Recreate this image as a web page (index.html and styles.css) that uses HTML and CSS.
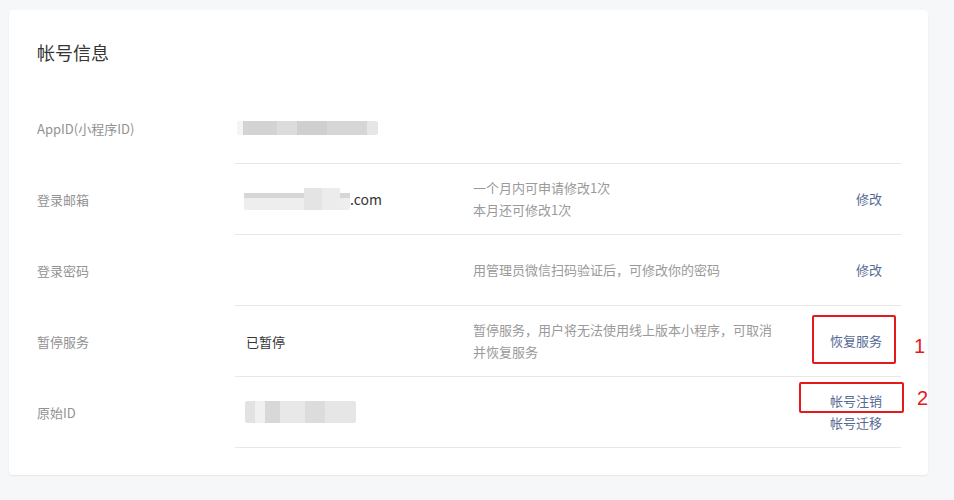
FILE: index.html
```html
<!DOCTYPE html>
<html lang="zh-CN">
<head>
<meta charset="utf-8">
<title>帐号信息</title>
<link rel="stylesheet" href="styles.css">
</head>
<body>
<div class="page">
  <div class="card">
    <h2 class="title">帐号信息</h2>
    <div class="rows">
      <div class="row">
        <div class="label">AppID(小程序ID)</div>
        <div class="main">
          <div class="value"><span class="blur blur-appid"></span></div>
          <div class="desc"></div>
          <div class="action"></div>
        </div>
      </div>
      <div class="row">
        <div class="label">登录邮箱</div>
        <div class="main">
          <div class="value"><span class="blur blur-mail"></span><span class="mail-tail">.com</span></div>
          <div class="desc">一个月内可申请修改1次<br>本月还可修改1次</div>
          <div class="action"><a class="link">修改</a></div>
        </div>
      </div>
      <div class="row">
        <div class="label">登录密码</div>
        <div class="main">
          <div class="value"></div>
          <div class="desc">用管理员微信扫码验证后，可修改你的密码</div>
          <div class="action"><a class="link">修改</a></div>
        </div>
      </div>
      <div class="row">
        <div class="label">暂停服务</div>
        <div class="main">
          <div class="value strong">已暂停</div>
          <div class="desc">暂停服务，用户将无法使用线上版本小程序，可取消并恢复服务</div>
          <div class="action"><a class="link">恢复服务</a></div>
        </div>
      </div>
      <div class="row">
        <div class="label">原始ID</div>
        <div class="main">
          <div class="value"><span class="blur blur-id"></span></div>
          <div class="desc"></div>
          <div class="action"><a class="link">帐号注销</a><br><a class="link">帐号迁移</a></div>
        </div>
      </div>
    </div>
    <div class="mark mark-1"></div>
    <div class="mark mark-2"></div>
    <div class="mark-num num-1">1</div>
    <div class="mark-num num-2">2</div>
  </div>
</div>
</body>
</html>
```
FILE: styles.css
```css
html, body {
  margin: 0;
  padding: 0;
  background: #f6f7f9;
  font-family: "Noto Sans CJK SC", "Noto Sans", "Liberation Sans", sans-serif;
}
.page {
  padding: 10px 0 0 9px;
  height: 490px;
}
.card {
  position: relative;
  width: 919px;
  box-sizing: border-box;
  padding: 30px 27px 27px 28px;
  background: #fff;
  border-radius: 4px;
  box-shadow: 0 1px 2px rgba(0, 0, 0, 0.07);
}
.title {
  margin: 0 0 29px 0;
  font-size: 18px;
  line-height: 24px;
  font-weight: normal;
  color: #353535;
}
.row {
  display: flex;
  font-size: 13px;
}
.label {
  width: 198px;
  flex: none;
  display: flex;
  align-items: center;
  color: #929292;
}
.main {
  flex: 1;
  display: flex;
  align-items: center;
  height: 70px;
  border-bottom: 1px solid #e7e7eb;
  padding: 0 19px 0 11px;
}
.value {
  width: 227px;
  flex: none;
  display: flex;
  align-items: center;
  color: #353535;
}
.desc {
  width: 305px;
  flex: none;
  color: #9a9a9a;
  line-height: 22px;
}
.action {
  flex: 1;
  text-align: right;
  line-height: 22px;
}
.link {
  color: #576b95;
  text-decoration: none;
}
.blur {
  display: inline-block;
  border-radius: 2px;
}
.blur-appid {
  width: 141px;
  height: 14px;
  margin-left: -9px;
  background:
    linear-gradient(90deg, #f4f4f4 0 6px, #d3d3d3 6px 40px, #dcdcdc 40px 60px, #cfcfcf 60px 90px, #d6d6d6 90px 130px, #e6e6e6 130px 141px);
}
.blur-mail {
  width: 106px;
  height: 22px;
  margin-left: -2px;
  background: linear-gradient(180deg, #fff 0 5px, #d6d6d6 5px 10px, #eeeeee 10px 22px);
  position: relative;
}
.blur-mail::after {
  content: "";
  position: absolute;
  left: 60px;
  top: 0;
  width: 36px;
  height: 22px;
  background: linear-gradient(90deg, #e4e4e4 0 18px, #ececec 18px 36px);
}
.mail-tail {
  color: #353535;
  font-size: 14px;
}
.blur-id {
  width: 111px;
  height: 22px;
  margin-left: -1px;
  background:
    linear-gradient(90deg, #e2e2e2 0 10px, #f0f0f0 10px 20px, #d8d8d8 20px 35px, #e8e8e8 35px 60px, #dcdcdc 60px 80px, #e6e6e6 80px 111px);
}
.strong {
  color: #353535;
}
.mark {
  position: absolute;
  border: 2px solid #e5191c;
  border-radius: 2px;
  box-sizing: border-box;
}
.mark-1 {
  left: 803px;
  top: 305px;
  width: 84px;
  height: 49px;
}
.mark-2 {
  left: 790px;
  top: 372px;
  width: 105px;
  height: 31px;
}
.mark-num {
  position: absolute;
  color: #e5191c;
  font-family: "Liberation Sans", sans-serif;
  font-size: 20px;
  line-height: 20px;
}
.num-1 {
  left: 905px;
  top: 326px;
}
.num-2 {
  left: 908px;
  top: 378px;
}
```
